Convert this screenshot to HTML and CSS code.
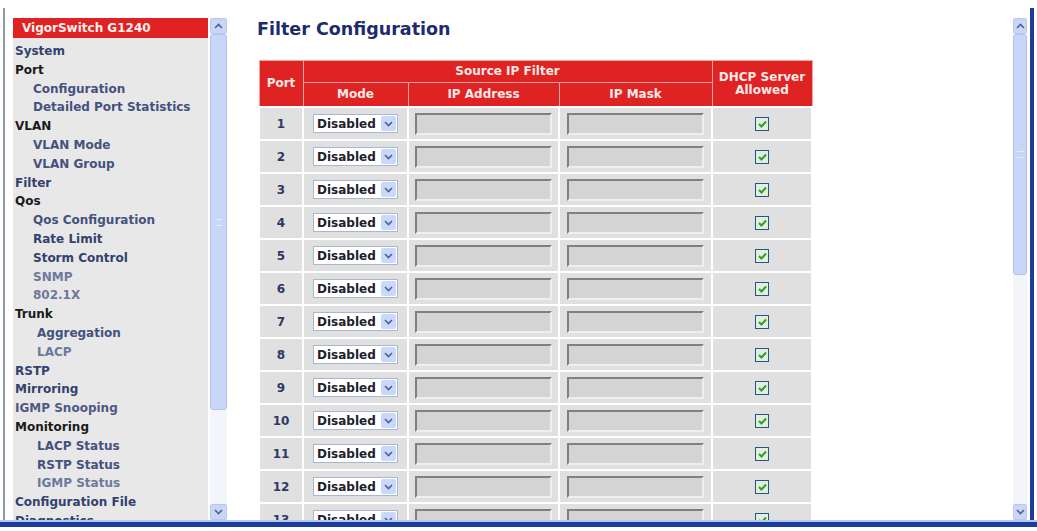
FILE: index.html
```html
<!DOCTYPE html>
<html lang="en">

<head>
    <meta charset="UTF-8">
    <meta name="viewport" content="width=device-width, initial-scale=1.0">
    <title>Filter Configuration</title>
    <link rel="stylesheet" href="styles.css">
</head>

<body>
    <div class="window">
        <div class="panes">
            <!-- Left menu frame -->
            <div class="nav-pane">
                <ul class="nav">
                    <li class="brand">VigorSwitch G1240</li>
                    <li class="link">System</li>
                    <li class="group">Port</li>
                    <li class="sub">Configuration</li>
                    <li class="sub">Detailed Port Statistics</li>
                    <li class="group">VLAN</li>
                    <li class="sub">VLAN Mode</li>
                    <li class="sub">VLAN Group</li>
                    <li class="link">Filter</li>
                    <li class="group">Qos</li>
                    <li class="sub">Qos Configuration</li>
                    <li class="sub dark">Rate Limit</li>
                    <li class="sub dark">Storm Control</li>
                    <li class="sub faint">SNMP</li>
                    <li class="sub faint">802.1X</li>
                    <li class="group">Trunk</li>
                    <li class="sub2">Aggregation</li>
                    <li class="sub2 faint">LACP</li>
                    <li class="link">RSTP</li>
                    <li class="link">Mirroring</li>
                    <li class="link soft">IGMP Snooping</li>
                    <li class="group">Monitoring</li>
                    <li class="sub2">LACP Status</li>
                    <li class="sub2">RSTP Status</li>
                    <li class="sub2 faint">IGMP Status</li>
                    <li class="link">Configuration File</li>
                    <li class="link">Diagnostics</li>
                </ul>
                <div class="scrollbar">
                    <div class="arrow"><svg width="9" height="6" viewBox="0 0 9 6"><path d="M1 5 L4.5 1.5 L8 5" /></svg></div>
                    <div class="thumb nav-thumb"><span class="grip"></span></div>
                    <div class="track"></div>
                    <div class="arrow"><svg width="9" height="6" viewBox="0 0 9 6"><path d="M1 1 L4.5 4.5 L8 1" /></svg></div>
                </div>
            </div>

            <!-- Main frame -->
            <div class="main-pane">
                <div class="content">
                    <h1>Filter Configuration</h1>
                    <table class="filter">
                        <thead>
                            <tr class="head-top">
                                <th rowspan="2" class="col-port">Port</th>
                                <th colspan="3">Source IP Filter</th>
                                <th rowspan="2" class="col-dhcp">DHCP Server<br>Allowed</th>
                            </tr>
                            <tr class="head-sub">
                                <th class="col-mode">Mode</th>
                                <th class="col-ip">IP Address</th>
                                <th class="col-mask">IP Mask</th>
                            </tr>
                        </thead>
                        <tbody id="rows"></tbody>
                    </table>
                </div>
                <div class="scrollbar main-scroll">
                    <div class="arrow"><svg width="9" height="6" viewBox="0 0 9 6"><path d="M1 5 L4.5 1.5 L8 5" /></svg></div>
                    <div class="thumb main-thumb"><span class="grip"></span></div>
                    <div class="track"></div>
                    <div class="arrow"><svg width="9" height="6" viewBox="0 0 9 6"><path d="M1 1 L4.5 4.5 L8 1" /></svg></div>
                </div>
            </div>
        </div>
        <div class="edge"></div>
    </div>

    <script>
        // one row per port
        let rows = document.getElementById("rows");
        for (let port = 1; port <= 13; port++) {
            let tr = document.createElement("tr");
            tr.innerHTML = `
                <td class="port">${port}</td>
                <td class="mode">
                    <span class="select">
                        <span class="value">Disabled</span>
                        <span class="drop"><svg width="9" height="6" viewBox="0 0 9 6"><path d="M1 1 L4.5 4.5 L8 1" /></svg></span>
                    </span>
                </td>
                <td><input class="ip" type="text" disabled></td>
                <td><input class="ip" type="text" disabled></td>
                <td class="dhcp">
                    <span class="check"><svg width="9" height="8" viewBox="0 0 9 8"><path d="M1 4 L3.5 6.5 L8 1.5" /></svg></span>
                </td>`;
            rows.appendChild(tr);
        }
    </script>
</body>

</html>
```

FILE: styles.css
```css
body {
    margin: 0;
    background-color: #fff;
    font-family: "DejaVu Sans", Verdana, sans-serif;
    overflow: hidden;
}

.window {
    width: 1037px;
    height: 531px;
    display: flex;
    flex-direction: column;
}

.panes {
    display: flex;
    height: 512px;
    margin-top: 8px;
}

/* left frame */

.nav-pane {
    display: flex;
    gap: 2px;
    margin-left: 3px;
    padding-left: 8px;
    border-left: 2px solid #8f98a8;
}

.nav {
    list-style: none;
    margin: 10px 0 0;
    padding: 0;
    width: 195px;
    background-color: #e8e8e8;
    font-size: 12px;
    font-weight: bold;
    overflow: hidden;
}

.nav li {
    line-height: 18.8px;
    padding-left: 2px;
    white-space: nowrap;
    color: #33416e;
}

.nav .brand {
    background-color: #e12222;
    color: #fff0f0;
    height: 20px;
    line-height: 20px;
    padding-left: 9px;
    margin-bottom: 4px;
}

.nav .group {
    color: #1a1a1a;
}

.nav .sub {
    padding-left: 20px;
    color: #44527e;
}

.nav .sub2 {
    padding-left: 24px;
    color: #44527e;
}

.nav .dark {
    color: #33416e;
}

.nav .soft {
    color: #4e5a84;
}

.nav .faint {
    color: #6c799c;
}

/* scroll bars */

.scrollbar {
    display: flex;
    flex-direction: column;
    width: 17px;
    margin-top: 10px;
}

.arrow {
    height: 16px;
    display: flex;
    align-items: center;
    justify-content: center;
    background-color: #c9d6f7;
    border: 1px solid #b7c8f0;
    border-radius: 2px;
    box-sizing: border-box;
}

.arrow path,
.drop path {
    fill: none;
    stroke: #4d6290;
    stroke-width: 1.6;
}

.thumb {
    display: flex;
    align-items: center;
    justify-content: center;
    background-color: #c9d6f8;
    border: 1px solid #afc2f0;
    border-radius: 3px;
    box-sizing: border-box;
}

.nav-thumb {
    height: 376px;
}

.main-thumb {
    height: 241px;
}

.grip {
    width: 7px;
    height: 7px;
    border-top: 1px solid #e6ecfc;
    border-bottom: 1px solid #e6ecfc;
    box-sizing: border-box;
}

.track {
    flex: 1;
    background-color: #f3f5fb;
}

/* main frame */

.main-pane {
    flex: 1;
    display: flex;
    margin-right: 3px;
    border-right: 4px solid #1e3c9c;
}

.content {
    flex: 1;
    padding-left: 30px;
    overflow: hidden;
}

.main-scroll {
    width: 14px;
    margin-right: 3px;
}

h1 {
    margin: 11px 0 21px;
    font-size: 17.5px;
    line-height: 20px;
    color: #1f2c6c;
}

.filter {
    margin-left: 1px;
    border-collapse: collapse;
    width: 555px;
    font-size: 12px;
    font-weight: bold;
}

.filter th {
    background-color: #df2323;
    color: #fde9e9;
    border: 1px solid #f0a3a3;
    padding: 0;
    line-height: 13px;
}

.head-top th {
    height: 21px;
}

.head-sub th {
    height: 23px;
}

.col-port {
    width: 43px;
}

.col-mode {
    width: 104px;
}

.col-ip {
    width: 150px;
}

.col-mask {
    width: 152px;
}

.filter td {
    background-color: #e0e0e0;
    border: 2px solid #fff;
    height: 31px;
    padding: 0;
    text-align: center;
}

.port {
    color: #2e3862;
}

.select {
    display: inline-flex;
    align-items: center;
    justify-content: space-between;
    width: 85px;
    height: 19px;
    background-color: #fff;
    border: 1px solid #a9b8d2;
    box-sizing: border-box;
    padding: 0 1px 0 3px;
    text-align: left;
    color: #20202c;
}

.drop {
    width: 15px;
    height: 15px;
    display: flex;
    align-items: center;
    justify-content: center;
    background-color: #cad8fb;
    border-radius: 2px;
}

.ip {
    display: block;
    margin: 0 auto;
    width: 137px;
    height: 22px;
    box-sizing: border-box;
    background-color: #d4d4d4;
    border: 2px solid;
    border-color: #808080 #efefef #efefef #808080;
}

.dhcp {
    line-height: 0;
}

.check {
    display: inline-flex;
    align-items: center;
    justify-content: center;
    width: 14px;
    height: 14px;
    box-sizing: border-box;
    border: 1px solid #235785;
    background-color: #e3eee0;
}

.check path {
    fill: none;
    stroke: #25a525;
    stroke-width: 2;
}

/* bottom window edge */

.edge {
    height: 5px;
    border-top: 2px solid #b4c9f2;
    background-color: #1c3d9e;
}
```
